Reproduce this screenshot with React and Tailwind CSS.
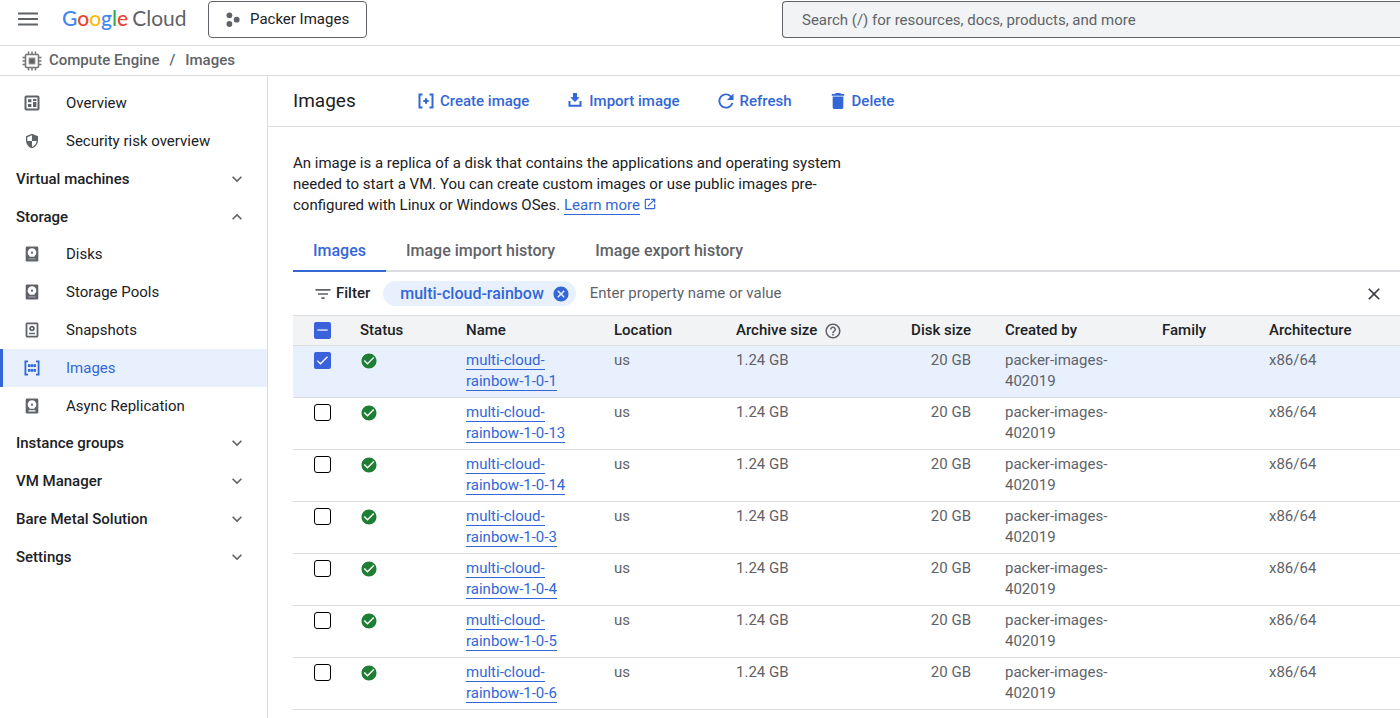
import React, { useState, useEffect, useRef } from "react";
import {
  MdCancel,
  MdCheckCircle,
  MdClose,
  MdExpandLess,
  MdExpandMore,
  MdFilterList,
  MdHelpOutline,
  MdOpenInNew,
  MdSecurity,
} from "react-icons/md";

const images = ["1-0-1", "1-0-13", "1-0-14", "1-0-3", "1-0-4", "1-0-5", "1-0-6"].map((version) => ({
  name: `multi-cloud-rainbow-${version}`,
  location: "us",
  archiveSize: "1.24 GB",
  diskSize: "20 GB",
  createdBy: "packer-images-402019",
  family: "",
  architecture: "x86/64",
}));

const tabs = ["Images", "Image import history", "Image export history"];

const OverviewIcon = () => (
  <svg viewBox="0 0 16 16" className="w-4 h-4" fill="none" stroke="currentColor">
    <rect x="1.5" y="1.5" width="13" height="13" rx="0.8" strokeWidth="2" />
    <path d="M4 4.2h3.4v3H4zM9 4h3.4v2H9zM9 7h3.4v5H9zM4 9h3.4v3H4z" fill="currentColor" stroke="none" />
  </svg>
);

const DiskShape = ({ barOpacity }) => (
  <svg viewBox="0 0 16 16" className="w-4 h-4">
    <rect x="1.7" y="0.5" width="12.6" height="15" rx="1.3" fill="currentColor" />
    <path d="M8 2.3a4.3 4.3 0 0 0-2.5 7.8V10.800h5V10.100A4.3 4.3 0 0 0 8 2.3z" fill="#fff" />
    <circle cx="8" cy="6.7" r="1.1" fill="currentColor" />
    <path d="M4.5 12.2h7v1.3h-7z" fill="#fff" fillOpacity={barOpacity} />
  </svg>
);

const DiskIcon = () => <DiskShape barOpacity={0.35} />;
const ReplicationIcon = () => <DiskShape barOpacity={1} />;

const SnapshotIcon = () => (
  <svg viewBox="0 0 16 16" className="w-4 h-4" fill="none" stroke="currentColor" strokeWidth="1.8">
    <rect x="2.5" y="1.3" width="11" height="13.4" rx="0.6" />
    <circle cx="8" cy="6.5" r="1.9" />
    <path d="M5 11.5h6" strokeWidth="1.4" />
  </svg>
);

const ImagesIcon = () => (
  <svg viewBox="0 0 16 16" className="w-4 h-4" fill="none" stroke="currentColor" strokeWidth="1.8">
    <path d="M4 1.4H1.4v13.2H4M12 1.4h2.6v13.2H12" />
    <path d="M4 5.7h8M4 10.3h8" strokeWidth="2.8" strokeDasharray="2.4 .4" />
  </svg>
);

const CreateImageIcon = () => (
  <svg viewBox="0 0 16 16" className="w-4 h-4" fill="none" stroke="currentColor" strokeWidth="2">
    <path d="M4.5 1.5H1.5v13h3M11.5 1.5h3v13h-3" />
    <path d="M8 5.3v5.4M5.3 8h5.4" />
  </svg>
);

const ImportIcon = () => (
  <svg viewBox="0 0 16 16" className="w-4 h-4" fill="currentColor">
    <path d="M6 0h4v4.3h2.8L8 9.1 3.2 4.3H6z" />
    <path d="M1.5 8v5.7h13V8h-2v3.7h-9V8z" />
  </svg>
);

const RefreshIcon = () => (
  <svg viewBox="3.5 3.5 17 17" className="w-4 h-4" fill="currentColor">
    <path d="M17.65 6.35A7.958 7.958 0 0 0 12 4c-4.42 0-7.99 3.58-7.99 8s3.57 8 7.99 8c3.73 0 6.84-2.55 7.73-6h-2.08A5.99 5.99 0 0 1 12 18c-3.31 0-6-2.69-6-6s2.69-6 6-6c1.66 0 3.14.69 4.22 1.78L13 11h7V4l-2.35 2.35z" />
  </svg>
);

const DeleteIcon = () => (
  <svg viewBox="3 3 18 18" className="w-4 h-4" fill="currentColor">
    <path d="M6 19c0 1.1.9 2 2 2h8c1.1 0 2-.9 2-2V7H6v12zM19 4h-3.5l-1-1h-5l-1 1H5v2h14V4z" />
  </svg>
);

const ChipIcon = () => (
  <svg viewBox="0 0 20 20" className="w-5 h-5" fill="none" stroke="#757575">
    <rect x="3.5" y="3.5" width="13" height="13" rx="1" strokeWidth="1.6" />
    <path
      d="M6.5 .5v3M10 .5v3M13.5 .5v3M6.5 16.5v3M10 16.5v3M13.5 16.5v3M.5 6.5h3M.5 10h3M.5 13.5h3M16.5 6.5h3M16.5 10h3M16.5 13.5h3"
      strokeWidth="1.5"
    />
    <rect x="7" y="7" width="6" height="6" fill="#616161" stroke="#9e9e9e" />
  </svg>
);

const ProjectIcon = () => (
  <svg viewBox="0 0 16 16" className="w-4 h-4" fill="#5f6368">
    <circle cx="3.4" cy="3.3" r="2.9" />
    <circle cx="3.4" cy="12" r="2.9" />
    <circle cx="10.7" cy="7.7" r="2.9" />
  </svg>
);

const navigation = [
  { label: "Overview", icon: OverviewIcon },
  { label: "Security risk overview", icon: MdSecurity },
  { label: "Virtual machines", children: [] },
  {
    label: "Storage",
    children: [
      { label: "Disks", icon: DiskIcon },
      { label: "Storage Pools", icon: DiskIcon },
      { label: "Snapshots", icon: SnapshotIcon },
      { label: "Images", icon: ImagesIcon },
      { label: "Async Replication", icon: ReplicationIcon },
    ],
  },
  { label: "Instance groups", children: [] },
  { label: "VM Manager", children: [] },
  { label: "Bare Metal Solution", children: [] },
  { label: "Settings", children: [] },
];

const actions = [
  { label: "Create image", icon: CreateImageIcon },
  { label: "Import image", icon: ImportIcon },
  { label: "Refresh", icon: RefreshIcon },
  { label: "Delete", icon: DeleteIcon },
];

const Checkbox = ({ label, checked, indeterminate = false, onChange }) => {
  const inputRef = useRef(null);
  const filled = checked || indeterminate;

  useEffect(() => {
    inputRef.current.indeterminate = indeterminate;
  }, [indeterminate]);

  return (
    <span className="grid w-[17px] h-[17px]">
      <input
        ref={inputRef}
        type="checkbox"
        aria-label={label}
        checked={checked}
        onChange={onChange}
        className={`col-start-1 row-start-1 appearance-none w-[17px] h-[17px] cursor-pointer ${
          filled ? "rounded-xs bg-[#3b62db]" : "rounded-[3px] bg-white border border-black"
        }`}
      />
      {filled && (
        <svg
          viewBox="0 0 18 18"
          className="col-start-1 row-start-1 w-[17px] h-[17px] pointer-events-none"
          fill="none"
          stroke="#fff"
          strokeWidth="1.3"
        >
          <path d={indeterminate ? "M3.5 8.5h11" : "M3.5 9.2l3.3 3.3 7.5-7.5"} />
        </svg>
      )}
    </span>
  );
};

const NavLink = ({ item, active }) => {
  const Icon = item.icon;
  return (
    <li>
      <a
        href="#"
        className={`flex items-center h-[38px] border-l-3 pl-5 text-[15px] ${
          active ? "border-[#3367d6] bg-[#e8f0fe] text-[#3367d6]" : "border-transparent text-[#202124]"
        }`}
      >
        <span className={`w-[43px] pl-px ${active ? "text-[#3367d6]" : "text-[#5f6368]"}`}>
          <Icon className="w-4 h-4" />
        </span>
        {item.label}
      </a>
    </li>
  );
};

const Sidebar = () => {
  const [openSection, setOpenSection] = useState("Storage");

  return (
    <nav className="w-[268px] shrink-0 border-r border-[#dadce0] pt-2">
      <ul>
        {navigation.map((item) => {
          if (!item.children) return <NavLink key={item.label} item={item} />;

          const isOpen = openSection === item.label;
          return (
            <li key={item.label}>
              <button
                className="flex items-center justify-between w-full h-[38px] pl-4 pr-5 text-[15px] font-medium text-[#202124]"
                aria-expanded={isOpen}
                onClick={() => setOpenSection(isOpen ? null : item.label)}
              >
                {item.label}
                {isOpen ? (
                  <MdExpandLess className="w-5 h-5 text-[#5f6368]" />
                ) : (
                  <MdExpandMore className="w-5 h-5 text-[#5f6368]" />
                )}
              </button>
              {isOpen && item.children.length > 0 && (
                <ul className="-my-px">
                  {item.children.map((child) => (
                    <NavLink key={child.label} item={child} active={child.label === "Images"} />
                  ))}
                </ul>
              )}
            </li>
          );
        })}
      </ul>
    </nav>
  );
};

const Header = () => (
  <header className="flex items-center h-[46px] pb-[7px] border-b border-[#dadce0]">
    <button aria-label="Navigation menu" className="ml-[18px]">
      <svg viewBox="0 0 20 16" className="w-5 h-4" stroke="#5f6368" strokeWidth="1.8">
        <path d="M0 2.500h20M0 8h20M0 13.500h20" />
      </svg>
    </button>
    <a
      href="#"
      className="flex gap-1 ml-6 pb-[2px] w-[122px] font-['Lato',sans-serif] text-[21px] leading-6 text-[#5f6368]"
    >
      <span className="font-medium">
        <span className="text-[#4285f4]">G</span>
        <span className="text-[#ea4335]">o</span>
        <span className="text-[#fbbc04]">o</span>
        <span className="text-[#4285f4]">g</span>
        <span className="text-[#34a853]">l</span>
        <span className="text-[#ea4335]">e</span>
      </span>
      <span>Cloud</span>
    </a>
    <button className="flex items-center gap-2 ml-6 mt-px h-[37px] px-[17px] border border-[#5f6368] rounded text-[15px] text-[#202124]">
      <ProjectIcon />
      Packer Images
    </button>
    <input
      type="text"
      aria-label="Search"
      placeholder="Search (/) for resources, docs, products, and more"
      className="flex-1 max-w-[618px] ml-auto mt-px h-[37px] pl-[19px] bg-[#f1f3f4] border border-r-0 border-[#5f6368] rounded-l text-[15px] placeholder:text-[#5f6368]"
    />
  </header>
);

const ImagesTable = () => {
  const [selected, setSelected] = useState([images[0].name]);
  const allSelected = selected.length === images.length;

  const toggleImage = (name) => {
    setSelected((prev) => (prev.includes(name) ? prev.filter((item) => item !== name) : [...prev, name]));
  };

  return (
    <table className="w-full table-fixed border-separate border-spacing-0 text-left">
      <colgroup>
        <col className="w-[67px]" />
        <col className="w-[106px]" />
        <col className="w-[148px]" />
        <col className="w-[122px]" />
        <col className="w-[110px]" />
        <col className="w-[159px]" />
        <col className="w-[157px]" />
        <col className="w-[107px]" />
        <col />
      </colgroup>
      <thead className="bg-[#f1f3f4] text-[15px] text-[#202124] [&_th]:h-[31px] [&_th]:font-medium [&_th]:border-y [&_th]:border-[#dadce0]">
        <tr>
          <th className="pl-[21px]">
            <Checkbox
              label="Select all images"
              checked={allSelected}
              indeterminate={selected.length > 0 && !allSelected}
              onChange={() => setSelected(allSelected ? [] : images.map((image) => image.name))}
            />
          </th>
          <th>Status</th>
          <th>Name</th>
          <th>Location</th>
          <th>
            <span className="flex items-center gap-[7px] whitespace-nowrap">
              Archive size
              <MdHelpOutline className="w-[18px] h-[18px] shrink-0 text-[#5f6368]" />
            </span>
          </th>
          <th className="text-right pr-[34px]">Disk size</th>
          <th>Created by</th>
          <th>Family</th>
          <th>Architecture</th>
        </tr>
      </thead>
      <tbody className="text-[15px] leading-[21px] text-[#5f6368] [&_td]:align-top [&_td]:pt-1 [&_td]:pb-[5px] [&_td]:border-b [&_td]:border-[#dadce0]">
        {images.map((image) => {
          const isSelected = selected.includes(image.name);
          return (
            <tr key={image.name} className={isSelected ? "bg-[#e8f0fe]" : ""}>
              <td className="pl-[21px]">
                <div className="flex items-center h-[21px]">
                  <Checkbox
                    label={`Select ${image.name}`}
                    checked={isSelected}
                    onChange={() => toggleImage(image.name)}
                  />
                </div>
              </td>
              <td>
                <div className="flex items-center h-[21px]">
                  <MdCheckCircle className="w-[18px] h-[18px] text-[#1e7e34]" aria-label="Ready" />
                </div>
              </td>
              <td className="pr-6">
                <a href="#" className="border-b border-[#3367d6] text-[#3367d6]">
                  {image.name}
                </a>
              </td>
              <td>{image.location}</td>
              <td>{image.archiveSize}</td>
              <td className="text-right pr-[34px]">{image.diskSize}</td>
              <td className="pr-6">{image.createdBy}</td>
              <td>{image.family}</td>
              <td>{image.architecture}</td>
            </tr>
          );
        })}
      </tbody>
    </table>
  );
};

const App = () => {
  const [activeTab, setActiveTab] = useState("Images");
  const [filters, setFilters] = useState(["multi-cloud-rainbow"]);

  return (
    <div className="flex flex-col min-h-screen bg-white font-['Roboto',sans-serif] text-[#202124]">
      <Header />

      {/* Breadcrumb */}
      <div className="flex items-center h-[30px] pl-[22px] border-b border-[#dadce0] text-[15px] font-medium text-[#5f6368]">
        <ChipIcon />
        <a href="#" className="ml-[7px]">Compute Engine</a>
        <span className="mx-[10px]">/</span>
        <a href="#">Images</a>
      </div>

      <div className="flex flex-1">
        <Sidebar />

        <main className="flex-1 min-w-0">
          {/* Toolbar */}
          <div className="flex items-center h-[51px] pl-[25px] border-b border-[#dadce0]">
            <h1 className="w-[125px] text-[19px]">Images</h1>
            <div className="flex items-center gap-[38px]">
              {actions.map(({ label, icon: Icon }) => (
                <button key={label} className="flex items-center gap-[6px] text-[15px] font-medium text-[#3367d6]">
                  <Icon />
                  {label}
                </button>
              ))}
            </div>
          </div>

          <div className="pl-[25px]">
            <p className="max-w-[560px] pt-[26px] text-[15px] leading-[21px]">
              An image is a replica of a disk that contains the applications and operating system needed to start a
              VM. You can create custom images or use public images pre-configured with Linux or Windows OSes.{" "}
              <a href="#" className="border-b border-[#3367d6] text-[#3367d6]">Learn more</a>
              <MdOpenInNew className="inline ml-[3px] -mt-1 w-[14px] h-[14px] text-[#3367d6]" />
            </p>

            {/* Tabs */}
            <div className="flex mt-4 border-b-2 border-[#dadce0]">
              {tabs.map((tab) => (
                <button
                  key={tab}
                  className={`h-10 -mb-[2px] px-5 border-b-2 text-[16px] font-medium ${
                    activeTab === tab ? "border-[#3367d6] text-[#3367d6]" : "border-transparent text-[#5f6368]"
                  }`}
                  onClick={() => setActiveTab(tab)}
                >
                  {tab}
                </button>
              ))}
            </div>

            {/* Filter bar */}
            <div className="flex items-center h-[43px] pl-5 pr-4">
              <MdFilterList className="w-5 h-5 text-[#5f6368]" />
              <label htmlFor="image-filter" className="ml-[3px] text-[15px] font-medium">
                Filter
              </label>
              {filters.map((filter) => (
                <span
                  key={filter}
                  className="flex items-center gap-2 ml-[13px] h-[25px] pl-[17px] pr-[6px] rounded-full bg-[#e8f0fe] text-[16px] font-medium text-[#3367d6]"
                >
                  {filter}
                  <button
                    aria-label={`Remove ${filter}`}
                    onClick={() => setFilters((prev) => prev.filter((item) => item !== filter))}
                  >
                    <MdCancel className="w-[18px] h-[18px]" />
                  </button>
                </span>
              ))}
              <input
                id="image-filter"
                type="text"
                placeholder="Enter property name or value"
                className="flex-1 min-w-0 ml-[14px] text-[15px] outline-none placeholder:text-[#5f6368]"
              />
              <button aria-label="Clear filters" onClick={() => setFilters([])}>
                <MdClose className="w-5 h-5 text-[#3c4043]" />
              </button>
            </div>

            <ImagesTable />
          </div>
        </main>
      </div>
    </div>
  );
};

export default App;
